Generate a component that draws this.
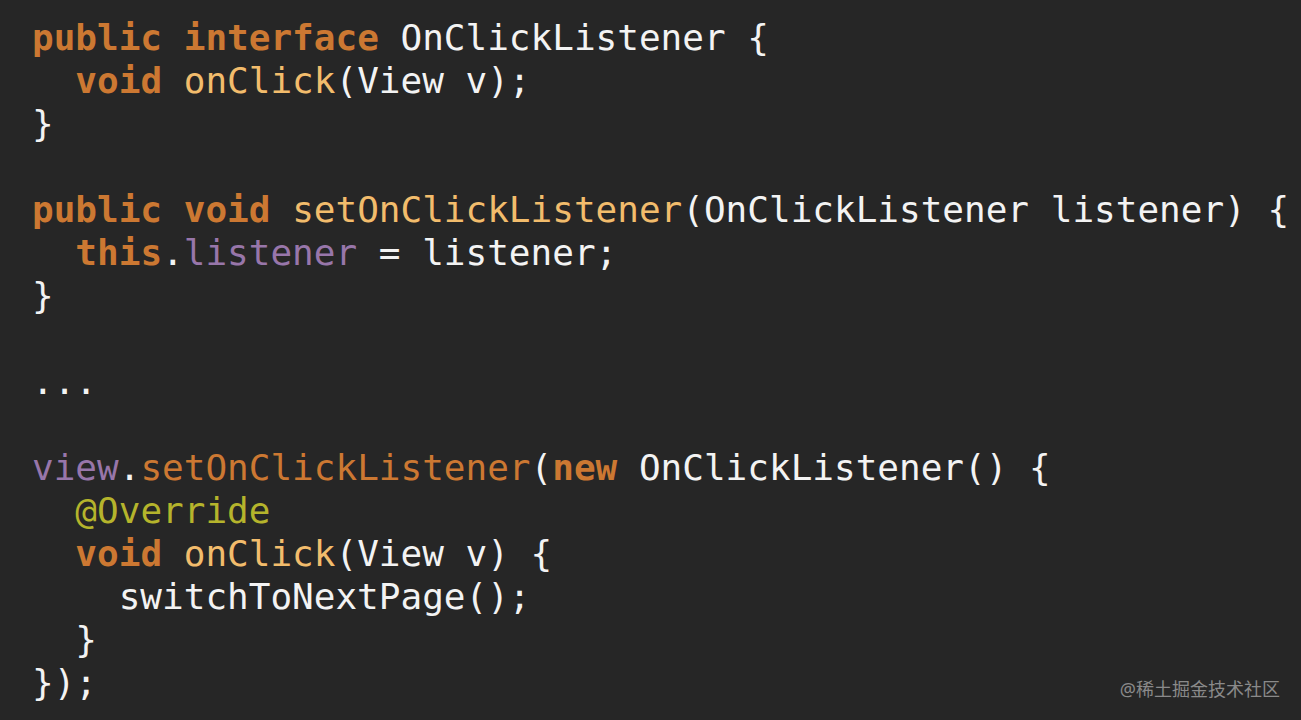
import React from "react";

const K = ({ children }: { children: React.ReactNode }) => (
  <span className="font-bold text-[#cc7832]">{children}</span>
);
const M = ({ children }: { children: React.ReactNode }) => (
  <span className="text-[#f2bc6c]">{children}</span>
);
const P = ({ children }: { children: React.ReactNode }) => (
  <span className="text-[#9876aa]">{children}</span>
);
const A = ({ children }: { children: React.ReactNode }) => (
  <span className="text-[#b5b42c]">{children}</span>
);
const O = ({ children }: { children: React.ReactNode }) => (
  <span className="text-[#cc7832]">{children}</span>
);

export default function App() {
  const lines: React.ReactNode[] = [
    <>
      <K>public</K> <K>interface</K> OnClickListener {"{"}
    </>,
    <>
      {"  "}
      <K>void</K> <M>onClick</M>(View v);
    </>,
    <>{"}"}</>,
    <>{" "}</>,
    <>
      <K>public</K> <K>void</K> <M>setOnClickListener</M>(OnClickListener listener) {"{"}
    </>,
    <>
      {"  "}
      <K>this</K>.<P>listener</P> = listener;
    </>,
    <>{"}"}</>,
    <>{" "}</>,
    <>...</>,
    <>{" "}</>,
    <>
      <P>view</P>.<O>setOnClickListener</O>(<K>new</K> OnClickListener() {"{"}
    </>,
    <>
      {"  "}
      <A>@Override</A>
    </>,
    <>
      {"  "}
      <K>void</K> <M>onClick</M>(View v) {"{"}
    </>,
    <>{"    switchToNextPage();"}</>,
    <>{"  }"}</>,
    <>{"});"}</>,
  ];
  return (
    <div className="relative w-[1301px] h-[720px] overflow-hidden bg-[#262626]">
      <div
        className="pl-[32px] pt-[16px] text-[36px] leading-[43px] text-[#f3f3f3] whitespace-pre"
        style={{ fontFamily: '"DejaVu Sans Mono", monospace' }}
      >
        {lines.map((l, i) => (
          <div key={i} className="h-[43px]">
            {l}
          </div>
        ))}
      </div>
      <div
        className="absolute right-[21px] bottom-[21px] text-[18px] leading-[20px] text-[#8a8a8a]"
        style={{ fontFamily: '"Noto Sans", "Noto Sans CJK SC", sans-serif' }}
      >
        @稀土掘金技术社区
      </div>
    </div>
  );
}
